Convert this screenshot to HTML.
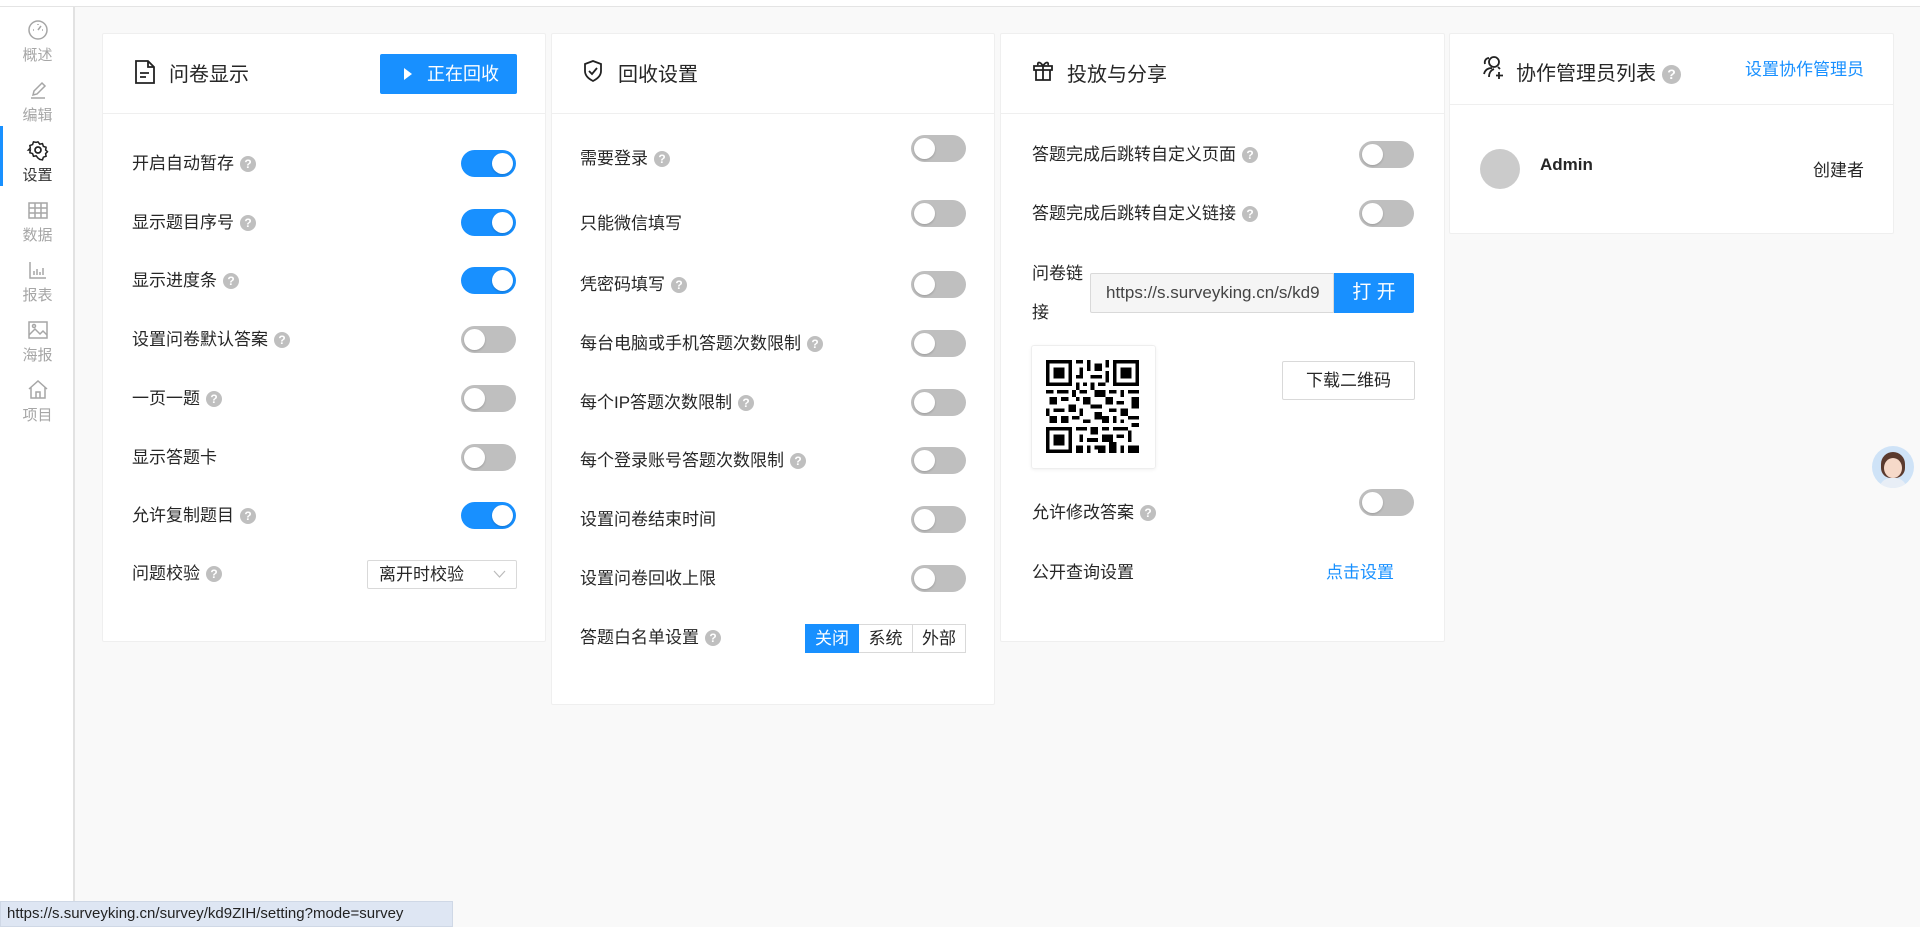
<!DOCTYPE html>
<html><head><meta charset="utf-8"><style>
*{box-sizing:border-box;margin:0;padding:0}
body{width:1920px;height:927px;background:#f9f9f9;font-family:"Liberation Sans","Noto Sans CJK SC",sans-serif;color:#262626;position:relative;overflow:hidden;font-size:17px}
.a{position:absolute}
.top{left:0;top:0;width:1920px;height:7px;background:#fff;border-bottom:1px solid #e4e4e4}
.side{left:0;top:7px;width:75px;height:920px;background:#fff;border-right:2px solid #e2e2e2}
.si{position:absolute;left:0;width:75px;text-align:center;color:#a6a6a6;font-size:15px}
.si svg{display:block;margin:0 auto 2px}
.panel{background:#fff;border:1px solid #efefef;border-radius:2px}
.hd{position:absolute;left:0;right:0;top:0;height:80px;border-bottom:1px solid #efefef}
.ttl{position:absolute;font-size:20px;color:#262626}
.lbl{position:absolute;white-space:nowrap;font-size:17px;line-height:20px}
.q{display:inline-block;width:16px;height:16px;border-radius:50%;background:#bfbfbf;color:#fff;font-size:12px;line-height:16px;text-align:center;vertical-align:1px;margin-left:6px;font-weight:bold}
.sw{position:absolute;width:55px;height:27px;border-radius:14px;background:#bfbfbf}
.sw::after{content:"";position:absolute;top:3px;left:3px;width:21px;height:21px;border-radius:50%;background:#fff;box-shadow:0 1px 2px rgba(0,0,0,.2)}
.sw.on{background:#1890ff}
.sw.on::after{left:31px}
.btn{position:absolute;border:1px solid #d9d9d9;background:#fff;text-align:center;font-size:17px;border-radius:2px}
</style></head><body>
<div class="a top"></div>
<div class="a side">
 <div class="a" style="left:0;top:119px;width:3px;height:60px;background:#1890ff"></div>
 <div class="si" style="top:11px"><svg width="24" height="24" viewBox="0 0 24 24" fill="none" stroke="#a6a6a6" stroke-width="1.5"><circle cx="12" cy="12" r="9"/><path d="M12 12l3-4M7 12h1M16 12h1M12 6v1"/></svg>概述</div>
 <div class="si" style="top:71px"><svg width="24" height="24" viewBox="0 0 24 24" fill="none" stroke="#a6a6a6" stroke-width="1.5"><path d="M7 17l1-4 8-8 3 3-8 8zM5 20h14"/></svg>编辑</div>
 <div class="si" style="top:131px;color:#333"><svg width="24" height="24" viewBox="0 0 24 24" fill="none" stroke="#222" stroke-width="1.7"><circle cx="12" cy="12" r="3"/><path d="M12 3l2 2.5 3-.5 1 3 3 1-.5 3 2 2-2 2 .5 3-3 1-1 3-3-.5L12 21l-2-2.5-3 .5-1-3-3-1 .5-3L1.5 12l2-2-.5-3 3-1 1-3 3 .5z" transform="scale(.9) translate(1.3 1.3)"/></svg>设置</div>
 <div class="si" style="top:191px"><svg width="24" height="24" viewBox="0 0 24 24" fill="none" stroke="#a6a6a6" stroke-width="1.5"><rect x="3" y="5" width="18" height="15"/><path d="M3 10h18M3 15h18M9 5v15M15 5v15"/></svg>数据</div>
 <div class="si" style="top:251px"><svg width="24" height="24" viewBox="0 0 24 24" fill="none" stroke="#a6a6a6" stroke-width="1.5"><path d="M4 4v16h16M8 17v-4M11 17v-6M14 17v-3M17 17v-7"/></svg>报表</div>
 <div class="si" style="top:311px"><svg width="24" height="24" viewBox="0 0 24 24" fill="none" stroke="#a6a6a6" stroke-width="1.5"><rect x="3" y="4" width="18" height="16"/><path d="M3 17l6-6 5 5 3-3 4 4"/><circle cx="8" cy="8" r="1.5"/></svg>海报</div>
 <div class="si" style="top:371px"><svg width="24" height="24" viewBox="0 0 24 24" fill="none" stroke="#a6a6a6" stroke-width="1.5"><path d="M3 11l9-8 9 8M5 9v11h14V9M10 20v-6h4v6"/></svg>项目</div>
</div>

<!-- Panel 1 -->
<div class="a panel" style="left:102px;top:33px;width:444px;height:609px">
 <div class="hd">
  <svg class="a" style="left:31px;top:25px" width="22" height="26" viewBox="0 0 22 26" fill="none" stroke="#222" stroke-width="1.8"><path d="M2 2h12l6 6v16H2z M14 2v6h6M6 14h9M6 18h6"/></svg>
  <div class="ttl" style="left:66px;top:24px">问卷显示</div>
  <div class="a" style="left:277px;top:20px;width:137px;height:40px;background:#1890ff;border-radius:2px;color:#fff;font-size:18px;line-height:40px"><span style="position:absolute;left:24px;top:14px;border-left:8px solid #fff;border-top:6px solid transparent;border-bottom:6px solid transparent"></span><span style="position:absolute;left:47px;top:0">正在回收</span></div>
 </div>
 <div class="lbl" style="left:29px;top:120px">开启自动暂存<span class="q">?</span></div><div class="sw on" style="left:358px;top:116px"></div>
 <div class="lbl" style="left:29px;top:179px">显示题目序号<span class="q">?</span></div><div class="sw on" style="left:358px;top:175px"></div>
 <div class="lbl" style="left:29px;top:237px">显示进度条<span class="q">?</span></div><div class="sw on" style="left:358px;top:233px"></div>
 <div class="lbl" style="left:29px;top:296px">设置问卷默认答案<span class="q">?</span></div><div class="sw" style="left:358px;top:292px"></div>
 <div class="lbl" style="left:29px;top:355px">一页一题<span class="q">?</span></div><div class="sw" style="left:358px;top:351px"></div>
 <div class="lbl" style="left:29px;top:414px">显示答题卡</div><div class="sw" style="left:358px;top:410px"></div>
 <div class="lbl" style="left:29px;top:472px">允许复制题目<span class="q">?</span></div><div class="sw on" style="left:358px;top:468px"></div>
 <div class="lbl" style="left:29px;top:530px">问题校验<span class="q">?</span></div>
 <div class="btn" style="left:264px;top:526px;width:150px;height:29px;text-align:left;padding-left:11px;line-height:27px">离开时校验<svg class="a" style="right:10px;top:9px" width="13" height="9" viewBox="0 0 13 9" fill="none" stroke="#bbb" stroke-width="1.2"><path d="M1 1l5.5 6L12 1"/></svg></div>
</div>

<!-- Panel 2 -->
<div class="a panel" style="left:551px;top:33px;width:444px;height:672px">
 <div class="hd">
  <svg class="a" style="left:30px;top:25px" width="22" height="24" viewBox="0 0 22 24" fill="none" stroke="#222" stroke-width="1.8"><path d="M11 2l8 3v7c0 5-4 8-8 10-4-2-8-5-8-10V5z M7 12l3 3 5-6"/></svg>
  <div class="ttl" style="left:66px;top:24px">回收设置</div>
 </div>
 <div class="lbl" style="left:28px;top:115px">需要登录<span class="q">?</span></div><div class="sw" style="left:359px;top:101px"></div>
 <div class="lbl" style="left:28px;top:180px">只能微信填写</div><div class="sw" style="left:359px;top:166px"></div>
 <div class="lbl" style="left:28px;top:241px">凭密码填写<span class="q">?</span></div><div class="sw" style="left:359px;top:237px"></div>
 <div class="lbl" style="left:28px;top:300px">每台电脑或手机答题次数限制<span class="q">?</span></div><div class="sw" style="left:359px;top:296px"></div>
 <div class="lbl" style="left:28px;top:359px">每个IP答题次数限制<span class="q">?</span></div><div class="sw" style="left:359px;top:355px"></div>
 <div class="lbl" style="left:28px;top:417px">每个登录账号答题次数限制<span class="q">?</span></div><div class="sw" style="left:359px;top:413px"></div>
 <div class="lbl" style="left:28px;top:476px">设置问卷结束时间</div><div class="sw" style="left:359px;top:472px"></div>
 <div class="lbl" style="left:28px;top:535px">设置问卷回收上限</div><div class="sw" style="left:359px;top:531px"></div>
 <div class="lbl" style="left:28px;top:594px">答题白名单设置<span class="q">?</span></div>
 <div class="a" style="left:253px;top:590px;height:29px;display:flex;font-size:17px;line-height:27px">
  <div style="width:54px;text-align:center;background:#1890ff;color:#fff;border:1px solid #1890ff">关闭</div>
  <div style="width:54px;text-align:center;border:1px solid #d9d9d9;border-left:0">系统</div>
  <div style="width:53px;text-align:center;border:1px solid #d9d9d9;border-left:0">外部</div>
 </div>
</div>

<!-- Panel 3 -->
<div class="a panel" style="left:1000px;top:33px;width:445px;height:609px">
 <div class="hd">
  <svg class="a" style="left:30px;top:24px" width="24" height="24" viewBox="0 0 24 24" fill="none" stroke="#222" stroke-width="1.8"><path d="M3 8h18v4H3zM5 12v10h14V12M12 8v14M12 8C9 3 6 4 7 7M12 8c3-5 6-4 5-1"/></svg>
  <div class="ttl" style="left:66px;top:24px">投放与分享</div>
 </div>
 <div class="lbl" style="left:31px;top:111px">答题完成后跳转自定义页面<span class="q">?</span></div><div class="sw" style="left:358px;top:107px"></div>
 <div class="lbl" style="left:31px;top:170px">答题完成后跳转自定义链接<span class="q">?</span></div><div class="sw" style="left:358px;top:166px"></div>
 <div class="lbl" style="left:31px;top:230px">问卷链</div>
 <div class="lbl" style="left:31px;top:269px">接</div>
 <div class="a" style="left:89px;top:239px;width:244px;height:40px;background:#f5f5f5;border:1px solid #d9d9d9;border-radius:2px 0 0 2px;font-size:17px;line-height:38px;padding-left:15px;overflow:hidden;white-space:nowrap;color:#444">https://s.surveyking.cn/s/kd9</div>
 <div class="a" style="left:333px;top:239px;width:80px;height:40px;background:#1890ff;color:#fff;font-size:19px;line-height:40px;text-align:center;border-radius:0 2px 2px 0">打 开</div>
 <div class="a" style="left:30px;top:311px;width:125px;height:124px;border:1px solid #eee;border-radius:3px;box-shadow:0 1px 3px rgba(0,0,0,.06)">
  <svg class="a" style="left:14px;top:14px" width="93" height="93" viewBox="0 0 25 25" shape-rendering="crispEdges"><g fill="#000">
  <path d="M0 0h7v7H0zM18 0h7v7h-7zM0 18h7v7H0z"/></g><g fill="#fff"><path d="M1 1h5v5H1zM19 1h5v5h-5zM1 19h5v5H1z"/></g><g fill="#000"><path d="M2 2h3v3H2zM20 2h3v3h-3zM2 20h3v3H2z"/>
  <path d="M8 0h2v1H8zM11 0h1v3h-1zM13 1h2v2h-2zM16 0h1v2h-1zM9 2h1v2H9zM8 4h2v1H8zM12 4h3v1h-3zM16 3h1v3h-1zM8 6h1v2H8zM10 6h1v1h-1zM12 6h1v2h-1zM14 6h2v1h-2z"/>
  <path d="M0 8h2v1H0zM3 8h3v1H3zM7 8h1v2H7zM9 8h2v1H9zM13 8h3v2h-3zM17 8h2v1h-2zM20 8h1v2h-1zM22 8h3v1h-3z"/>
  <path d="M1 10h2v2H1zM4 10h2v1H4zM8 10h1v1H8zM10 10h2v2h-2zM16 10h2v2h-2zM19 11h2v1h-2zM23 10h2v3h-2z"/>
  <path d="M0 13h1v2H0zM2 13h3v1H2zM6 12h2v2H6zM9 13h1v2H9zM12 12h3v1h-3zM13 14h2v2h-2zM17 13h2v1h-2zM20 13h2v2h-2z"/>
  <path d="M1 15h2v2H1zM4 15h2v2H4zM7 15h2v1H7zM10 16h2v1h-2zM15 15h2v2h-2zM18 15h1v2h-1zM22 15h3v1h-3zM20 16h1v1h-1zM23 17h2v1h-2z"/>
  <path d="M8 18h3v1H8zM12 18h2v2h-2zM15 18h2v1h-2zM18 18h4v1h-4zM9 20h1v2H9zM11 21h3v1h-3zM15 20h3v2h-3zM19 20h2v1h-2zM22 19h1v3h-1z"/>
  <path d="M8 23h2v2H8zM11 23h1v2h-1zM13 23h3v1h-3zM17 22h2v3h-2zM20 23h1v2h-1zM22 23h3v2h-3zM14 24h2v1h-2z"/></g></svg>
 </div>
 <div class="btn" style="left:281px;top:327px;width:133px;height:39px;line-height:37px">下载二维码</div>
 <div class="lbl" style="left:31px;top:469px">允许修改答案<span class="q">?</span></div><div class="sw" style="left:358px;top:455px"></div>
 <div class="lbl" style="left:31px;top:529px">公开查询设置</div>
 <div class="lbl" style="left:325px;top:529px;color:#1890ff">点击设置</div>
</div>

<!-- Panel 4 -->
<div class="a panel" style="left:1449px;top:33px;width:445px;height:201px">
 <div class="hd" style="height:71px">
  <svg class="a" style="left:32px;top:20px" width="24" height="26" viewBox="0 0 24 26" fill="none" stroke="#222" stroke-width="1.8"><circle cx="12" cy="8" r="5"/><path d="M7 4c-3 0-5 3-4 6M2 20c1-4 4-6 8-6M12 15c-3 1-5 4-5 8M17 18v7M14 21.5h7M16 13l2 2"/></svg>
  <div class="ttl" style="left:66px;top:23px">协作管理员列表<span class="q" style="width:19px;height:19px;line-height:19px;font-size:14px">?</span></div>
  <div class="lbl" style="right:29px;top:26px;color:#1890ff">设置协作管理员</div>
 </div>
 <div class="a" style="left:30px;top:115px;width:40px;height:40px;border-radius:50%;background:#cbcbcb"></div>
 <div class="lbl" style="left:90px;top:121px;font-weight:bold">Admin</div>
 <div class="lbl" style="right:29px;top:127px">创建者</div>
</div>

<!-- floating avatar -->
<div class="a" style="left:1872px;top:446px;width:42px;height:42px;border-radius:50%;background:#cfe3f7;overflow:hidden">
 <div class="a" style="left:9px;top:6px;width:24px;height:26px;border-radius:12px 12px 10px 10px;background:#5a3a2e"></div>
 <div class="a" style="left:12px;top:12px;width:18px;height:20px;border-radius:50%;background:#f6d9c9"></div>
 <div class="a" style="left:7px;top:32px;width:28px;height:14px;border-radius:12px 12px 0 0;background:#e8eef6"></div>
</div>

<div class="a" style="left:0;top:901px;width:453px;height:26px;background:#dee6f3;border:1px solid #cfd8e6;font-size:15px;line-height:24px;padding-left:6px;color:#222;white-space:nowrap">https://s.surveyking.cn/survey/kd9ZIH/setting?mode=survey</div>
</body></html>
